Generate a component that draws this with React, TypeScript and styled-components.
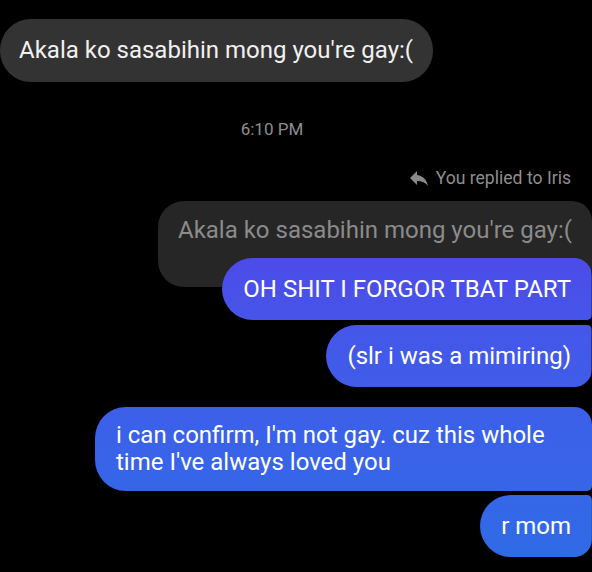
import React from "react";
import styled, { createGlobalStyle } from "styled-components";

const Global = createGlobalStyle`
  html, body { margin: 0; padding: 0; background: #000; }
  body { font-family: Roboto, "Noto Sans", "Liberation Sans", sans-serif; }
`;

const Screen = styled.div`
  width: 592px;
  height: 572px;
  overflow: hidden;
  background: #000;
  display: flex;
  flex-direction: column;
  padding-top: 19px;
  box-sizing: border-box;
`;

const Row = styled.div<{ $align: "start" | "end" | "center"; $mt?: number }>`
  display: flex;
  justify-content: ${(p) => (p.$align === "start" ? "flex-start" : p.$align === "end" ? "flex-end" : "center")};
  margin-top: ${(p) => p.$mt ?? 0}px;
  position: relative;
`;

const IncomingBubble = styled.div`
  background: #333333;
  color: #f1f1f1;
  font-size: 24px;
  line-height: 27px;
  padding: 18px 20px 18px 19px;
  border-radius: 31px;
  white-space: nowrap;
`;

const Timestamp = styled.div`
  color: #8e8e8e;
  font-size: 17px;
  line-height: 20px;
  margin-right: 48px;
`;

const ReplyHeader = styled.div`
  display: flex;
  align-items: center;
  gap: 5px;
  color: #8e8e8e;
  font-size: 17.6px;
  line-height: 20px;
  padding-right: 21px;
  svg {
    width: 24px;
    height: 24px;
    fill: #8a8a8a;
  }
`;

const QuoteBubble = styled.div`
  background: #262626;
  color: #8b8b8b;
  font-size: 24px;
  line-height: 27px;
  padding: 16px 20px 43px 20px;
  border-radius: 26px 20px 20px 26px;
  white-space: nowrap;
`;

const Bubble = styled.div<{ $tr: number; $br: number; $multi?: boolean }>`
  background: linear-gradient(180deg, #4d4ae9 250px, #4458e9 340px, #3a62e9 440px, #2f6be6 560px);
  background-attachment: fixed;
  color: #ffffff;
  font-size: 24px;
  line-height: 27px;
  padding: ${(p) => (p.$multi ? "15px 21px 15px 21px" : "18px 21px 17px 21px")};
  max-width: 455px;
  border-radius: 31px ${(p) => p.$tr}px ${(p) => p.$br}px 31px;
  position: relative;
`;

const ReplyIcon = () => (
  <svg viewBox="0 0 24 24" aria-hidden="true">
    <path d="M10 9V5l-7 7 7 7v-4.1c5 0 8.5 1.6 11 5.1-1-5-4-10-11-11z" />
  </svg>
);

export default function App() {
  return (
    <>
      <Global />
      <Screen>
        <Row $align="start">
          <IncomingBubble>Akala ko sasabihin mong you're gay:(</IncomingBubble>
        </Row>
        <Row $align="center" $mt={37}>
          <Timestamp>6:10 PM</Timestamp>
        </Row>
        <Row $align="end" $mt={27}>
          <ReplyHeader>
            <ReplyIcon />
            You replied to Iris
          </ReplyHeader>
        </Row>
        <Row $align="end" $mt={11}>
          <QuoteBubble>Akala ko sasabihin mong you're gay:(</QuoteBubble>
        </Row>
        <Row $align="end" $mt={-29}>
          <Bubble $tr={18} $br={5}>OH SHIT I FORGOR TBAT PART</Bubble>
        </Row>
        <Row $align="end" $mt={5}>
          <Bubble $tr={5} $br={18}>(slr i was a mimiring)</Bubble>
        </Row>
        <Row $align="end" $mt={20}>
          <Bubble $tr={18} $br={5} $multi>
            i can confirm, I'm not gay. cuz this whole time I've always loved you
          </Bubble>
        </Row>
        <Row $align="end" $mt={4}>
          <Bubble $tr={5} $br={18}>r mom</Bubble>
        </Row>
      </Screen>
    </>
  );
}
